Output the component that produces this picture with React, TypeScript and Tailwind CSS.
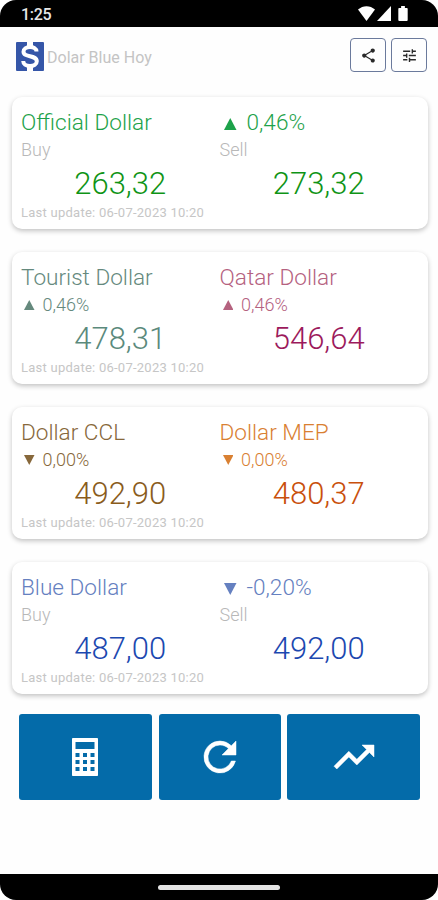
import React from 'react';
import { MdShare, MdTune } from 'react-icons/md';

interface Quote {
    title: string;
    note: string;
    value: string;
    // tailwind text colours for the heading and the amount
    color: string;
    valueColor: string;
    trend?: 'up' | 'down';
    trendOn?: 'title' | 'note';
}

const LAST_UPDATE = 'Last update: 06-07-2023 10:20';

const CARDS: Quote[][] = [
    [
        { title: 'Official Dollar', note: 'Buy', value: '263,32', color: 'text-[#1da24a]', valueColor: 'text-[#0f9416]' },
        { title: '0,46%', note: 'Sell', value: '273,32', color: 'text-[#1da24a]', valueColor: 'text-[#0f9416]', trend: 'up', trendOn: 'title' },
    ],
    [
        { title: 'Tourist Dollar', note: '0,46%', value: '478,31', color: 'text-[#65897d]', valueColor: 'text-[#5b8a7c]', trend: 'up', trendOn: 'note' },
        { title: 'Qatar Dollar', note: '0,46%', value: '546,64', color: 'text-[#b5627f]', valueColor: 'text-[#9c1a5c]', trend: 'up', trendOn: 'note' },
    ],
    [
        { title: 'Dollar CCL', note: '0,00%', value: '492,90', color: 'text-[#87683b]', valueColor: 'text-[#8a5c1c]', trend: 'down', trendOn: 'note' },
        { title: 'Dollar MEP', note: '0,00%', value: '480,37', color: 'text-[#d98032]', valueColor: 'text-[#c9500c]', trend: 'down', trendOn: 'note' },
    ],
    [
        { title: 'Blue Dollar', note: 'Buy', value: '487,00', color: 'text-[#6580c0]', valueColor: 'text-[#1c48b0]' },
        { title: '-0,20%', note: 'Sell', value: '492,00', color: 'text-[#6580c0]', valueColor: 'text-[#1c48b0]', trend: 'down', trendOn: 'title' },
    ],
];

const TrendArrow: React.FC<{ trend: 'up' | 'down'; className: string }> = ({ trend, className }) => (
    <svg viewBox="0 0 12 12" preserveAspectRatio="none" fill="currentColor" className={className}>
        <path d={trend === 'up' ? 'M6 0L12 12H0z' : 'M0 0H12L6 12z'} />
    </svg>
);

const QuoteColumn: React.FC<{ quote: Quote }> = ({ quote }) => {
    const { title, note, value, color, valueColor, trend, trendOn } = quote;
    return (
        <div className="w-[198.5px] whitespace-nowrap">
            <div className={`flex h-[30px] items-start text-[22.6px] leading-[32px] ${color}`}>
                {trend && trendOn === 'title' && <TrendArrow trend={trend} className="ml-[4.5px] mr-[10px] mt-[11px] h-[12px] w-[12.5px]" />}
                {title}
            </div>
            {trend && trendOn === 'note' ? (
                <div className={`flex h-[26px] items-center text-[18px] leading-[25px] ${color}`}>
                    <TrendArrow trend={trend} className="ml-[3px] mr-[8px] mt-[1px] h-[10px] w-[10.5px]" />
                    {note}
                </div>
            ) : (
                <div className="h-[26px] text-[18px] leading-[25px] text-[#b8b8b8]">{note}</div>
            )}
            <div className={`h-[40px] text-center text-[31px] leading-[42px] ${valueColor}`}>{value}</div>
        </div>
    );
};

const QuoteCard: React.FC<{ quotes: Quote[] }> = ({ quotes }) => (
    <section className="h-[132.5px] rounded-[10px] bg-white pl-[9.5px] pt-[10px] shadow-[0_2px_5px_rgba(0,0,0,0.24)]">
        <div className="flex">
            {quotes.map((quote) => (
                <QuoteColumn key={quote.value} quote={quote} />
            ))}
        </div>
        <p className="text-[13px] font-normal leading-[20px] tracking-[0.25px] text-[#c6c6c6]">{LAST_UPDATE}</p>
    </section>
);

const Logo = () => (
    <svg viewBox="0 0 28 29" className="h-[29px] w-[28px]">
        <rect width="28" height="29" rx="1" fill="#3556a8" />
        <path d="M11 0H17V5H11zM11 24H17V29H11z" fill="#fff" />
        <path
            d="M20.5 9.5C20.5 6.500 17.500 5 14 5C10.200 5 7.500 6.800 7.500 9.700C7.500 16 20.800 12.500 20.800 19.300C20.800 22.300 17.800 24 14 24C10 24 7.200 22 7.200 19"
            fill="none"
            stroke="#fff"
            strokeWidth="4"
        />
    </svg>
);

const CalculatorIcon = () => (
    <svg viewBox="0 0 26 38" className="h-[38px] w-[26px]">
        <rect width="26" height="38" rx="0.800" fill="#fff" />
        <path
            d="M3.500 4h19v7h-19z M3.500 15h4v4h-4z M11 15h4v4h-4z M18.500 15h4v4h-4z M3.500 22h4v4h-4z M11 22h4v4h-4z M18.500 22h4v4h-4z M3.500 29h4v4h-4z M11 29h4v4h-4z M18.500 29h4v4h-4z"
            fill="#046ba9"
        />
    </svg>
);

const RefreshIcon = () => (
    <svg viewBox="0 0 24 24" className="h-[48px] w-[48px]" fill="currentColor" stroke="currentColor" strokeWidth="0.25">
        <path d="M17.65 6.35A7.96 7.96 0 0 0 12 4a8 8 0 1 0 7.73 10h-2.080A6 6 0 1 1 12 6c1.660 0 3.140.690 4.220 1.780L13 11h7V4z" />
    </svg>
);

const TrendingIcon = () => (
    <svg viewBox="0 0 24 24" className="h-[48px] w-[48px]" fill="currentColor" stroke="currentColor" strokeWidth="0.25">
        <path d="M16 6l2.290 2.290-4.880 4.880-4-4L2 16.590 3.410 18l6-6 4 4 6.300-6.290L22 12V6z" />
    </svg>
);

const StatusIcons = () => (
    <div className="flex items-start text-white">
        <svg viewBox="0 0 17 15" className="h-[15px] w-[17px]" fill="currentColor">
            <path d="M0 3.500C5 -1 12 -1 17 3.500L8.500 15z" />
        </svg>
        <svg viewBox="0 0 14 15" className="ml-[2px] h-[15px] w-[14px]" fill="currentColor">
            <path d="M14 0V15H0z" />
        </svg>
        <svg viewBox="0 0 10 16" className="ml-[7px] h-[15px] w-[10px]" fill="currentColor">
            <path d="M3 0H7V2H9Q10 2 10 3V15Q10 16 9 16H1Q0 16 0 15V3Q0 2 1 2H3z" />
        </svg>
    </div>
);

const App = () => {
    return (
        <div className="h-[900px] w-[438px] overflow-hidden bg-white">
            <div className="flex h-full flex-col overflow-hidden rounded-[16px] bg-[#fefefe] font-['Roboto',sans-serif] font-light">
                <div className="flex h-[27px] shrink-0 items-start justify-between bg-black pl-[21px] pr-[30px] pt-[6px]">
                    <span className="text-[16px] font-medium leading-[17px] tracking-[-0.3px] text-[#e8e8e8]">1:25</span>
                    <StatusIcons />
                </div>

                <header className="flex h-[69.6px] shrink-0 items-start pl-[15.5px] pr-[11px]">
                    <div className="mt-[15px]">
                        <Logo />
                    </div>
                    <h1 className="ml-[3.5px] mt-[18px] text-[16px] font-normal leading-[25px] text-[#c4c4c4]">Dolar Blue Hoy</h1>
                    <div className="ml-auto mt-[11px] flex gap-[5px]">
                        <button className="flex h-[34px] w-[36px] items-center justify-center rounded-[4px] border border-[#6b7a9c] text-[#2a2a2a]">
                            <MdShare size={17} />
                        </button>
                        <button className="flex h-[34px] w-[36px] items-center justify-center rounded-[4px] border border-[#6b7a9c] text-[#2a2a2a]">
                            <MdTune size={17} />
                        </button>
                    </div>
                </header>

                <main className="flex shrink-0 flex-col gap-[22.5px] pl-[11.5px] pr-[10.5px]">
                    {CARDS.map((quotes) => (
                        <QuoteCard key={quotes[0].value} quotes={quotes} />
                    ))}
                </main>

                <nav className="mt-[20.4px] flex h-[86px] shrink-0 gap-[6.5px] pl-[18.5px] pr-[18px] text-white">
                    <button className="flex w-[133.5px] items-center justify-center rounded-[3px] bg-[#046ba9]">
                        <CalculatorIcon />
                    </button>
                    <button className="flex w-[122px] items-center justify-center rounded-[3px] bg-[#046ba9]">
                        <RefreshIcon />
                    </button>
                    <button className="flex w-[133px] items-center justify-center rounded-[3px] bg-[#046ba9]">
                        <TrendingIcon />
                    </button>
                </nav>

                <footer className="mt-auto flex h-[26px] shrink-0 justify-center bg-black pt-[11px]">
                    <div className="h-[5px] w-[122px] rounded-full bg-[#e4e4e4]" />
                </footer>
            </div>
        </div>
    );
};

export default App;
